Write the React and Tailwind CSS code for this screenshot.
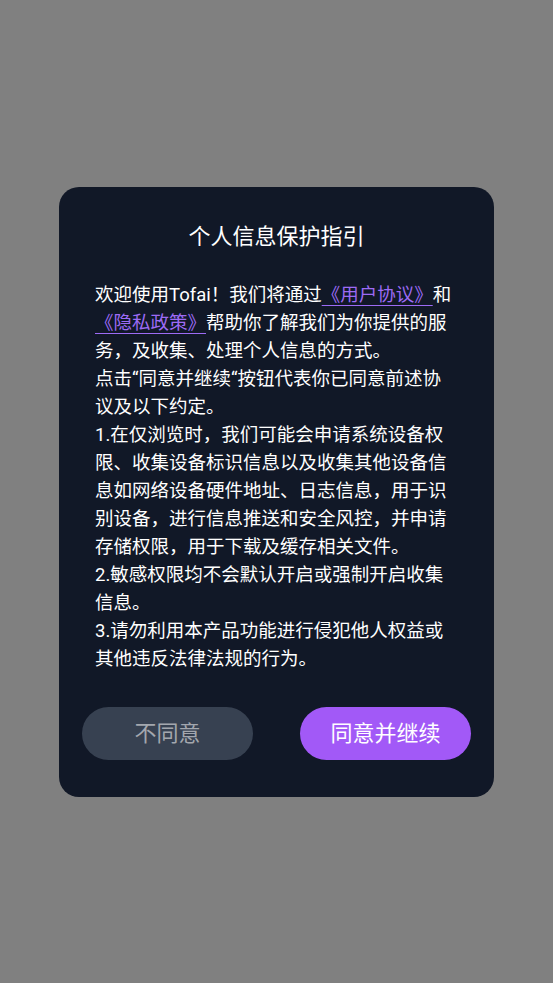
import React from 'react';

const font = { fontFamily: '"Roboto", "Noto Sans CJK SC", sans-serif' };

const PrivacyDialog = () => {
  return (
    <div className="min-h-screen flex items-center justify-center bg-[#808080]" style={font}>
      <div className="w-[435px] bg-[#111827] rounded-[20px] pt-[35px] pb-[37px]">
        <h1 className="text-center text-white text-[22px] leading-[30px] font-normal">个人信息保护指引</h1>

        <div className="mt-[29px] px-[36px] text-white text-[18.5px] leading-[28px]">
          <p>
            欢迎使用Tofai！我们将通过
            <a href="#" className="text-[#9d6bf5] underline underline-offset-[4px] decoration-[#9d6bf5]">《用户协议》</a>
            和
            <a href="#" className="text-[#9d6bf5] underline underline-offset-[4px] decoration-[#9d6bf5]">《隐私政策》</a>
            帮助你了解我们为你提供的服务，及收集、处理个人信息的方式。
          </p>
          <p>点击“同意并继续“按钮代表你已同意前述协议及以下约定。</p>
          <p>1.在仅浏览时，我们可能会申请系统设备权限、收集设备标识信息以及收集其他设备信息如网络设备硬件地址、日志信息，用于识别设备，进行信息推送和安全风控，并申请存储权限，用于下载及缓存相关文件。</p>
          <p>2.敏感权限均不会默认开启或强制开启收集信息。</p>
          <p>3.请勿利用本产品功能进行侵犯他人权益或其他违反法律法规的行为。</p>
        </div>

        <div className="mt-[34px] px-[23px] flex justify-between">
          <button
            type="button"
            className="w-[171px] h-[53px] rounded-full bg-[#374151] text-[#a3a7ae] text-[22px]"
          >
            不同意
          </button>
          <button
            type="button"
            className="w-[171px] h-[53px] rounded-full bg-[#a259f7] text-white text-[22px]"
          >
            同意并继续
          </button>
        </div>
      </div>
    </div>
  );
};

export default function App() {
  return <PrivacyDialog />;
}
